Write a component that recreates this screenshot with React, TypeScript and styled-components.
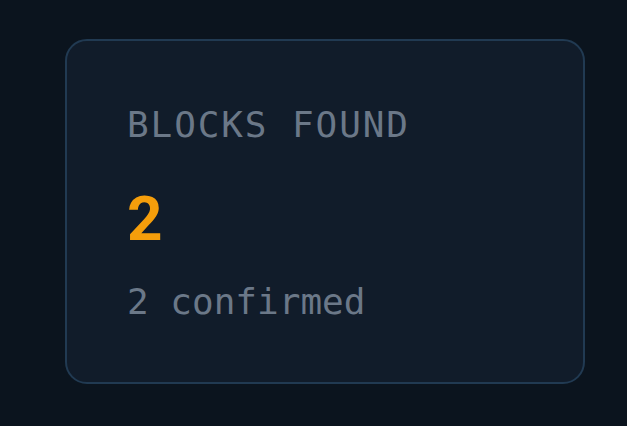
import React from "react";
import styled, { createGlobalStyle } from "styled-components";

const GlobalStyle = createGlobalStyle`
  html, body {
    margin: 0;
    padding: 0;
    background: #0b141e;
  }
  * {
    box-sizing: border-box;
  }
`;

const Page = styled.div`
  width: 627px;
  height: 426px;
  padding: 39px 0 0 65px;
  background: #0b141e;
`;

const StatCard = styled.div`
  width: 520px;
  display: flex;
  flex-direction: column;
  padding: 66px 60px 62px 60px;
  background: #111c2a;
  border: 2px solid #213a52;
  border-radius: 22px;
`;

const Label = styled.div`
  font-family: "DejaVu Sans Mono", "Liberation Mono", monospace;
  font-size: 36px;
  line-height: 1;
  letter-spacing: 1.9px;
  color: #6b7888;
`;

const Value = styled.div<{ $accent: string }>`
  margin-top: 45px;
  font-family: Roboto, "Noto Sans", sans-serif;
  font-weight: 700;
  font-size: 62px;
  line-height: 1;
  color: ${(p) => p.$accent};
`;

const Sub = styled.div`
  margin-top: 34px;
  font-family: "DejaVu Sans Mono", "Liberation Mono", monospace;
  font-size: 36px;
  line-height: 1;
  color: #6b7888;
`;

export default function App() {
  return (
    <>
      <GlobalStyle />
      <Page>
        <StatCard>
          <Label>BLOCKS FOUND</Label>
          <Value $accent="#f59e0b">2</Value>
          <Sub>2 confirmed</Sub>
        </StatCard>
      </Page>
    </>
  );
}
